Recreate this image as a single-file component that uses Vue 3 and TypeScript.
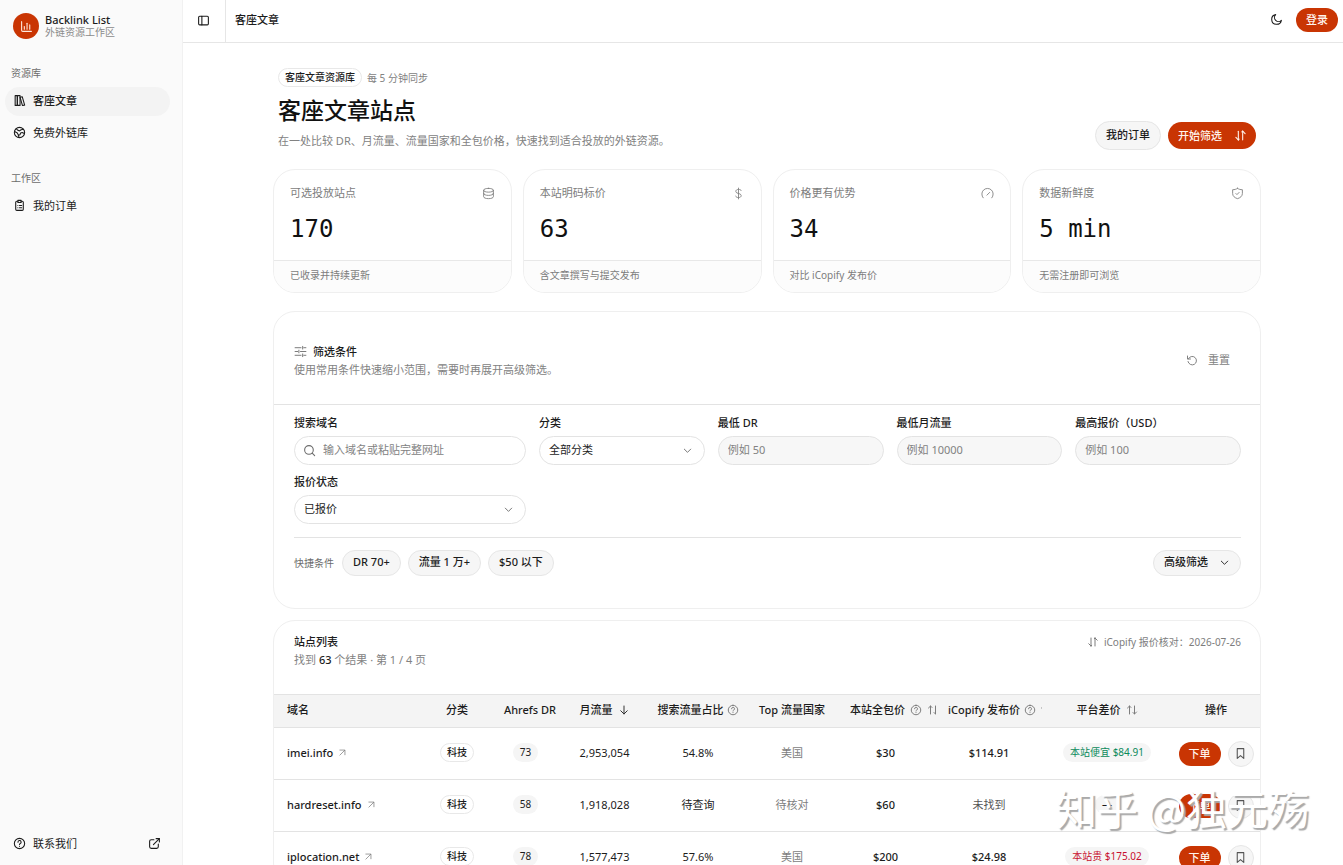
<script setup lang="ts">
import { ref } from 'vue'

interface Stat {
  label: string
  value: string
  note: string
  icon: string[]
}

interface Site {
  domain: string
  category: string
  dr: number
  traffic: string
  share: string
  country: string
  price: string
  rival: string
  diff: string
  tone: 'good' | 'bad' | 'none'
}

const icons = {
  panel: ['M5 4h14a2 2 0 0 1 2 2v12a2 2 0 0 1-2 2H5a2 2 0 0 1-2-2V6a2 2 0 0 1 2-2z', 'M9 4v16'],
  chart: ['M3 3v16a2 2 0 0 0 2 2h16', 'M8 17v-5', 'M13 17V6', 'M18 17V9'],
  books: ['M4 3h4v18H4z', 'M8 3h5v18H8z', 'M13 6l4-1 4.500 15.500-4 .8z'],
  world: ['M12 2.500a9.500 9.500 0 1 0 0 19 9.500 9.500 0 0 0 0-19z', 'M3 10l5 3 2 4 3-1 1-3 3-1 4 2', 'M6 5l3 3 3 1 3-2 4-1', 'M10 17l1 4'],
  clipboard: ['M9 4H7a2 2 0 0 0-2 2v13a2 2 0 0 0 2 2h10a2 2 0 0 0 2-2V6a2 2 0 0 0-2-2h-2', 'M9 2.500h6v4H9z', 'M9 12h.01M12 12h4M9 16h.01M12 16h4'],
  help: ['M12 2.500a9.500 9.500 0 1 0 0 19 9.500 9.500 0 0 0 0-19z', 'M9.200 9.500a2.900 2.900 0 1 1 4.300 2.500c-1 .6-1.500 1-1.500 2', 'M12 17.200v.1'],
  external: ['M11 5H6a3 3 0 0 0-3 3v10a3 3 0 0 0 3 3h10a3 3 0 0 0 3-3v-5', 'M10 14L21 3', 'M15 3h6v6'],
  moon: ['M21 13.500A9 9 0 1 1 10.500 3a7.200 7.200 0 0 0 10.500 10.500z'],
  sortDown: ['M8 4v16', 'M3.500 15.500L8 20', 'M16 20V4', 'M20.500 8.500L16 4', 'M8 20l1.500-1.500', 'M16 4l-1.500 1.500'],
  sortUp: ['M7 20V4', 'M3 8l4-4 3 3', 'M17 4v16', 'M21 16l-4 4-3-3'],
  database: ['M12 2.500c5 0 9 1.500 9 3.500s-4 3.500-9 3.500S3 8 3 6s4-3.500 9-3.500z', 'M3 6v12c0 2 4 3.500 9 3.500s9-1.500 9-3.500V6', 'M3 12c0 2 4 3.500 9 3.500s9-1.500 9-3.500'],
  dollar: ['M12 2v20', 'M17 6.500C16.500 5 14.500 4.500 12 4.500c-3 0-5 1.300-5 3.700 0 5 10 2.600 10 7.600 0 2.400-2 3.700-5 3.700-2.700 0-4.700-.8-5.200-2.700'],
  gauge: ['M4 20a10.500 10.500 0 1 1 16 0', 'M11 15l5-5'],
  shield: ['M12 2.500c2.500 1.800 5.500 2.500 9 2.500V12c0 5-4 8-9 9.500C7 20 3 17 3 12V5c3.500 0 6.500-.7 9-2.500z', 'M9 12l2 2 4-4'],
  sliders: ['M2 5h11M18 5h4M16 2.500v5', 'M2 12h5M12 12h10M9 9.500v5', 'M2 19h11M18 19h4M16 16.500v5'],
  reset: ['M3 4v6h6', 'M4.500 10a8.500 8.500 0 1 1-.5 5'],
  search: ['M11 3a8 8 0 1 0 0 16 8 8 0 0 0 0-16z', 'M17 17l4.500 4.500'],
  chevron: ['M5 9l7 7 7-7'],
  down: ['M12 4v16', 'M5.500 13.500L12 20l6.500-6.500'],
  arrow: ['M5 19L18 6', 'M5 5.500h13.500V18'],
  bookmark: ['M6 3h12v18l-6-5-6 5z'],
}

const stats: Stat[] = [
  { label: '可选投放站点', value: '170', note: '已收录并持续更新', icon: icons.database },
  { label: '本站明码标价', value: '63', note: '含文章撰写与提交发布', icon: icons.dollar },
  { label: '价格更有优势', value: '34', note: '对比 iCopify 发布价', icon: icons.gauge },
  { label: '数据新鲜度', value: '5 min', note: '无需注册即可浏览', icon: icons.shield },
]

const numberFields = [
  { id: 'min-dr', label: '最低 DR', hint: '例如 50' },
  { id: 'min-traffic', label: '最低月流量', hint: '例如 10000' },
  { id: 'max-price', label: '最高报价（USD）', hint: '例如 100' },
]

const quickFilters = ['DR 70+', '流量 1 万+', '$50 以下']

const sites: Site[] = [
  { domain: 'imei.info', category: '科技', dr: 73, traffic: '2,953,054', share: '54.8%', country: '美国', price: '$30', rival: '$114.91', diff: '本站便宜 $84.91', tone: 'good' },
  { domain: 'hardreset.info', category: '科技', dr: 58, traffic: '1,918,028', share: '待查询', country: '待核对', price: '$60', rival: '未找到', diff: '—', tone: 'none' },
  { domain: 'iplocation.net', category: '科技', dr: 78, traffic: '1,577,473', share: '57.6%', country: '美国', price: '$200', rival: '$24.98', diff: '本站贵 $175.02', tone: 'bad' },
]

const keyword = ref('')
const category = ref('全部分类')
const quoteState = ref('已报价')
</script>

<template>
  <div class="app">
    <aside class="sidebar">
      <a class="brand" href="#">
        <span class="logo">
          <svg class="icon" viewBox="0 0 24 24"><path v-for="d in icons.chart" :key="d" :d="d" /></svg>
        </span>
        <span class="brand-text">
          <span class="brand-name">Backlink List</span>
          <span class="brand-sub">外链资源工作区</span>
        </span>
      </a>
      <nav class="nav">
        <h2 class="nav-title">资源库</h2>
        <a class="nav-item active" href="#">
          <svg class="icon" viewBox="0 0 24 24"><path v-for="d in icons.books" :key="d" :d="d" /></svg>客座文章
        </a>
        <a class="nav-item" href="#">
          <svg class="icon" viewBox="0 0 24 24"><path v-for="d in icons.world" :key="d" :d="d" /></svg>免费外链库
        </a>
        <h2 class="nav-title second">工作区</h2>
        <a class="nav-item" href="#">
          <svg class="icon" viewBox="0 0 24 24"><path v-for="d in icons.clipboard" :key="d" :d="d" /></svg>我的订单
        </a>
      </nav>
      <a class="nav-item contact" href="#">
        <svg class="icon" viewBox="0 0 24 24"><path v-for="d in icons.help" :key="d" :d="d" /></svg>联系我们
        <svg class="icon end" viewBox="0 0 24 24"><path v-for="d in icons.external" :key="d" :d="d" /></svg>
      </a>
    </aside>

    <div class="main">
      <header class="topbar">
        <div class="toggle-box">
          <button class="ghost" type="button" aria-label="切换侧边栏">
            <svg class="icon" viewBox="0 0 24 24"><path v-for="d in icons.panel" :key="d" :d="d" /></svg>
          </button>
        </div>
        <span class="crumb">客座文章</span>
        <button class="ghost theme" type="button" aria-label="切换主题">
          <svg class="icon" viewBox="0 0 24 24"><path v-for="d in icons.moon" :key="d" :d="d" /></svg>
        </button>
        <button class="primary login" type="button">登录</button>
      </header>

      <main class="content">
        <section class="hero">
          <div>
            <div class="hero-meta">
              <span class="tag">客座文章资源库</span>
              <span class="sync">每 5 分钟同步</span>
            </div>
            <h1>客座文章站点</h1>
            <p>在一处比较 DR、月流量、流量国家和全包价格，快速找到适合投放的外链资源。</p>
          </div>
          <div class="hero-actions">
            <button class="soft orders" type="button">我的订单</button>
            <button class="primary start" type="button">
              开始筛选
              <svg class="icon" viewBox="0 0 24 24"><path v-for="d in icons.sortDown" :key="d" :d="d" /></svg>
            </button>
          </div>
        </section>

        <section class="stats">
          <article v-for="s in stats" :key="s.label" class="card stat">
            <div class="stat-body">
              <div class="stat-label">
                {{ s.label }}
                <svg class="icon" viewBox="0 0 24 24"><path v-for="d in s.icon" :key="d" :d="d" /></svg>
              </div>
              <div class="stat-value">{{ s.value }}</div>
            </div>
            <div class="stat-note">{{ s.note }}</div>
          </article>
        </section>

        <section class="card filters">
          <div class="filters-head">
            <div>
              <h2 class="card-title">
                <svg class="icon" viewBox="0 0 24 24"><path v-for="d in icons.sliders" :key="d" :d="d" /></svg>筛选条件
              </h2>
              <p class="muted">使用常用条件快速缩小范围，需要时再展开高级筛选。</p>
            </div>
            <button class="reset" type="button">
              <svg class="icon" viewBox="0 0 24 24"><path v-for="d in icons.reset" :key="d" :d="d" /></svg>重置
            </button>
          </div>
          <form class="filters-body" @submit.prevent>
            <div class="fields">
              <div class="field">
                <label for="keyword">搜索域名</label>
                <div class="control">
                  <svg class="icon lead" viewBox="0 0 24 24"><path v-for="d in icons.search" :key="d" :d="d" /></svg>
                  <input id="keyword" v-model="keyword" class="with-icon" type="text" placeholder="输入域名或粘贴完整网址" />
                </div>
              </div>
              <div class="field">
                <label for="category">分类</label>
                <div class="control">
                  <select id="category" v-model="category"><option>全部分类</option><option>科技</option></select>
                  <svg class="icon trail" viewBox="0 0 24 24"><path v-for="d in icons.chevron" :key="d" :d="d" /></svg>
                </div>
              </div>
              <div v-for="f in numberFields" :key="f.id" class="field">
                <label :for="f.id">{{ f.label }}</label>
                <div class="control"><input :id="f.id" class="filled" type="text" inputmode="numeric" :placeholder="f.hint" /></div>
              </div>
              <div class="field">
                <label for="quote">报价状态</label>
                <div class="control">
                  <select id="quote" v-model="quoteState"><option>已报价</option><option>待报价</option></select>
                  <svg class="icon trail" viewBox="0 0 24 24"><path v-for="d in icons.chevron" :key="d" :d="d" /></svg>
                </div>
              </div>
            </div>
            <div class="quick">
              <span class="quick-label">快捷条件</span>
              <button v-for="q in quickFilters" :key="q" class="soft chip" type="button">{{ q }}</button>
              <button class="soft chip advanced" type="button">
                高级筛选
                <svg class="icon" viewBox="0 0 24 24"><path v-for="d in icons.chevron" :key="d" :d="d" /></svg>
              </button>
            </div>
          </form>
        </section>

        <section class="card list">
          <div class="list-head">
            <div>
              <h2 class="card-title">站点列表</h2>
              <p class="muted">找到 <strong>63</strong> 个结果 · 第 1 / 4 页</p>
            </div>
            <span class="checked">
              <svg class="icon" viewBox="0 0 24 24"><path v-for="d in icons.sortDown" :key="d" :d="d" /></svg>
              <span>iCopify 报价核对：2026-07-26</span>
            </span>
          </div>
          <table>
            <colgroup>
              <col class="c-domain" /><col class="c-cat" /><col class="c-dr" /><col class="c-traffic" /><col class="c-share" />
              <col class="c-country" /><col class="c-price" /><col class="c-rival" /><col class="c-diff" /><col class="c-act" />
            </colgroup>
            <thead>
              <tr>
                <th class="left">域名</th>
                <th>分类</th>
                <th class="clip">Ahrefs DR</th>
                <th><span class="th">月流量<svg class="icon dark" viewBox="0 0 24 24"><path v-for="d in icons.down" :key="d" :d="d" /></svg></span></th>
                <th><span class="th tight">搜索流量占比<svg class="icon" viewBox="0 0 24 24"><path v-for="d in icons.help" :key="d" :d="d" /></svg></span></th>
                <th>Top 流量国家</th>
                <th class="clip">
                  <span class="th">本站全包价<svg class="icon" viewBox="0 0 24 24"><path v-for="d in icons.help" :key="d" :d="d" /></svg><svg class="icon" viewBox="0 0 24 24"><path v-for="d in icons.sortUp" :key="d" :d="d" /></svg></span>
                </th>
                <th class="clip near">
                  <span class="th">iCopify 发布价<svg class="icon" viewBox="0 0 24 24"><path v-for="d in icons.help" :key="d" :d="d" /></svg><svg class="icon" viewBox="0 0 24 24"><path v-for="d in icons.sortUp" :key="d" :d="d" /></svg></span>
                </th>
                <th><span class="th">平台差价<svg class="icon" viewBox="0 0 24 24"><path v-for="d in icons.sortUp" :key="d" :d="d" /></svg></span></th>
                <th>操作</th>
              </tr>
            </thead>
            <tbody>
              <tr v-for="s in sites" :key="s.domain">
                <td class="left">
                  <a class="domain" href="#">{{ s.domain }}<svg class="icon" viewBox="0 0 24 24"><path v-for="d in icons.arrow" :key="d" :d="d" /></svg></a>
                </td>
                <td><span class="tag">{{ s.category }}</span></td>
                <td><span class="badge">{{ s.dr }}</span></td>
                <td>{{ s.traffic }}</td>
                <td>{{ s.share }}</td>
                <td class="grey">{{ s.country }}</td>
                <td class="strong">{{ s.price }}</td>
                <td :class="s.tone === 'none' ? 'dim' : 'strong'">{{ s.rival }}</td>
                <td><span class="badge" :class="s.tone">{{ s.diff }}</span></td>
                <td>
                  <span class="actions">
                    <button class="primary order" type="button">下单</button>
                    <button class="soft save" type="button" :aria-label="`收藏 ${s.domain}`">
                      <svg class="icon" viewBox="0 0 24 24"><path v-for="d in icons.bookmark" :key="d" :d="d" /></svg>
                    </button>
                  </span>
                </td>
              </tr>
            </tbody>
          </table>
        </section>
      </main>
    </div>
    <div class="watermark">知乎 @独元殇</div>
  </div>
</template>

<style>
body {
  margin: 0;
  background: #fff;
}
</style>

<style scoped>
.app {
  position: relative;
  display: flex;
  height: 100vh;
  overflow: hidden;
  color: #1c1c1c;
  font: 400 11px/18px "Noto Sans", "Noto Sans CJK SC", sans-serif;
}
.app *,
.app *::before {
  box-sizing: border-box;
}
h1,
h2,
p {
  margin: 0;
}
a {
  color: inherit;
  text-decoration: none;
}
button,
input,
select {
  margin: 0;
  font: inherit;
  color: inherit;
}
button {
  display: inline-flex;
  align-items: center;
  justify-content: center;
  padding: 0;
  border: 0;
  background: none;
  white-space: nowrap;
  cursor: pointer;
}
.icon {
  flex: none;
  width: 13px;
  height: 13px;
  fill: none;
  stroke: currentColor;
  stroke-width: 2;
  stroke-linecap: round;
  stroke-linejoin: round;
}

/* Sidebar */
.sidebar {
  display: flex;
  flex: none;
  flex-direction: column;
  width: 183px;
  padding: 13px 12px 6px 5px;
  border-right: 1px solid #f1f1f1;
  background: #fafafa;
}
.brand {
  display: flex;
  align-items: center;
  gap: 6px;
  padding: 0 8px;
}
.logo {
  display: grid;
  place-items: center;
  width: 26px;
  height: 26px;
  border-radius: 50%;
  background: #c93503;
  color: #ffe9dc;
}
.brand-text {
  display: flex;
  flex-direction: column;
  line-height: 13px;
}
.brand-name {
  font-weight: 500;
}
.brand-sub {
  color: #8b8b8b;
  font-size: 10px;
}
.nav {
  flex: 1;
}
.nav-title {
  height: 28px;
  margin-top: 20px;
  padding-left: 6px;
  color: #6c6c6c;
  font-size: 10px;
  font-weight: 400;
  line-height: 28px;
}
.nav-title.second {
  margin-top: 16px;
}
.nav-item {
  display: flex;
  align-items: center;
  gap: 7px;
  height: 29px;
  margin-bottom: 3px;
  padding: 0 9px 2px 8px;
  border-radius: 15px;
}
.nav-item.active {
  background: #f3f3f3;
  font-weight: 500;
}
.contact {
  margin: 0;
}
.end {
  margin-left: auto;
}

/* Top bar */
.main {
  display: flex;
  flex: 1;
  flex-direction: column;
  min-width: 0;
}
.topbar {
  display: flex;
  flex: none;
  align-items: center;
  height: 43px;
  padding: 0 5px 3px 0;
  border-bottom: 1px solid #e6e6e6;
}
.toggle-box {
  display: grid;
  place-items: center;
  align-self: stretch;
  width: 43px;
  margin-bottom: -3px;
  padding: 0 2px 2px 0;
  border-right: 1px solid #e6e6e6;
}
.ghost {
  width: 24px;
  height: 24px;
}
.crumb {
  padding-left: 9px;
  font-weight: 500;
}
.theme {
  margin-left: auto;
}
.primary {
  border-radius: 15px;
  background: #c93503;
  color: #fff3ec;
  font-weight: 500;
}
.login {
  width: 42px;
  height: 24px;
  margin-left: 8px;
}

/* Page */
.content {
  flex: 1;
  min-height: 0;
  overflow-y: auto;
  padding: 25px 82px 20px 90px;
  scrollbar-width: none;
}
.hero {
  display: flex;
  align-items: flex-end;
  justify-content: space-between;
  padding: 0 5px;
}
.hero-meta {
  display: flex;
  align-items: center;
  gap: 5px;
}
.tag {
  display: inline-block;
  height: 19px;
  padding: 0 6px;
  border: 1px solid #e8e8e8;
  border-radius: 10px;
  font-size: 10px;
  font-weight: 500;
  line-height: 16px;
}
.sync {
  color: #828282;
  font-size: 10px;
}
h1 {
  margin-top: 7px;
  color: #111;
  font-size: 23px;
  font-weight: 500;
  line-height: 32px;
}
.hero p {
  margin-top: 6px;
  color: #828282;
}
.hero-actions {
  display: flex;
  align-items: center;
  gap: 7px;
}
.soft {
  border: 1px solid #e6e6e6;
  border-radius: 15px;
  background: #f6f6f6;
  font-weight: 500;
}
.orders {
  height: 29px;
  padding: 0 10px 2px;
}
.start {
  gap: 12px;
  height: 27px;
  padding: 0 9px 0 10px;
}
.card {
  overflow: hidden;
  border: 1px solid #efefef;
  border-radius: 22px;
  background: #fff;
}
.stats {
  display: grid;
  grid-template-columns: repeat(4, 1fr);
  gap: 11px;
  margin-top: 19px;
}
.stat-body {
  height: 90px;
  padding: 14px 16px 0;
}
.stat-label {
  display: flex;
  align-items: center;
  justify-content: space-between;
  color: #7d7d7d;
}
.stat-label .icon,
.card-title .icon {
  stroke-width: 1.6;
}
.stat-value {
  margin-top: 10px;
  color: #111;
  font: 400 24px/34px "DejaVu Sans Mono", monospace;
}
.stat-note {
  height: 32px;
  padding: 0 16px;
  border-top: 1px solid #e8e8e8;
  background: #fcfcfc;
  color: #7d7d7d;
  font-size: 10px;
  line-height: 28px;
}

/* Filters */
.filters {
  margin-top: 18px;
}
.filters-head {
  display: flex;
  align-items: center;
  justify-content: space-between;
  height: 93px;
  padding: 5px 30px 0 20px;
  border-bottom: 1px solid #e3e3e3;
}
.card-title {
  display: flex;
  align-items: center;
  gap: 6px;
  font-size: 11px;
  font-weight: 500;
  line-height: 18px;
}
.card-title .icon {
  color: #666;
}
.muted,
.reset {
  color: #828282;
}
.muted strong {
  color: #1c1c1c;
  font-weight: 500;
}
.reset {
  gap: 10px;
  padding-bottom: 2px;
}
.reset .icon {
  width: 12px;
  height: 12px;
}
.filters-body {
  padding: 9px 19px 32px 20px;
}
.fields {
  display: grid;
  grid-template-columns: 14fr repeat(4, 10fr);
  gap: 8px 13px;
}
.field {
  display: flex;
  flex-direction: column;
  gap: 4px;
  min-width: 0;
}
.field label {
  font-weight: 500;
}
.control {
  position: relative;
}
.control input,
.control select {
  display: block;
  width: 100%;
  height: 29px;
  padding: 0 9px 2px;
  border: 1px solid #e3e3e3;
  border-radius: 15px;
  outline: none;
  background: #fff;
  appearance: none;
}
.control input::placeholder {
  color: #828282;
  opacity: 1;
}
.control .with-icon {
  padding-left: 28px;
}
.control .filled {
  background: #f7f7f7;
}
.lead,
.trail {
  position: absolute;
  top: 8px;
  color: #6c6c6c;
  pointer-events: none;
}
.lead {
  left: 9px;
}
.trail {
  top: 9px;
  right: 12px;
  width: 11px;
  height: 11px;
}
.quick {
  display: flex;
  align-items: center;
  gap: 7px;
  margin-top: 13px;
  padding-top: 12px;
  border-top: 1px solid #e3e3e3;
}
.quick-label {
  margin-right: 1px;
  color: #6c6c6c;
  font-size: 10px;
}
.chip {
  height: 26px;
  padding: 0 10px 2px;
}
.advanced {
  gap: 11px;
  margin-left: auto;
}
.advanced .icon {
  width: 11px;
  height: 11px;
}

/* Site list */
.list {
  margin-top: 11px;
}
.list-head {
  display: flex;
  justify-content: space-between;
  height: 73px;
  padding: 12px 19px 0 20px;
}
.checked {
  display: flex;
  align-items: center;
  gap: 5px;
  height: 18px;
  color: #7d7d7d;
  font-size: 10px;
}
.checked .icon {
  width: 12px;
  height: 12px;
}
table {
  width: 100%;
  border-collapse: collapse;
  table-layout: fixed;
}
.c-cat { width: 64px; }
.c-dr { width: 73px; }
.c-traffic { width: 85px; }
.c-share { width: 102px; }
.c-country { width: 86px; }
.c-price { width: 101px; }
.c-rival { width: 106px; }
.c-diff { width: 130px; }
.c-act { width: 88px; }
th {
  height: 33px;
  padding: 0 0 2px;
  border-top: 1px solid #e3e3e3;
  background: #f4f4f4;
  font-weight: 500;
  text-align: center;
  white-space: nowrap;
}
th.clip {
  overflow: hidden;
  padding-left: 15px;
  text-align: left;
}
th.near {
  padding-left: 12px;
}
.th {
  display: inline-flex;
  align-items: center;
  gap: 5px;
  vertical-align: top;
}
.near .th {
  gap: 4px;
}
.th.tight {
  gap: 3px;
}
.th .icon {
  width: 12px;
  height: 12px;
  color: #7d7d7d;
}
.th .dark {
  color: #333;
}
td {
  height: 52px;
  padding: 0 0 2px;
  border-top: 1px solid #e3e3e3;
  text-align: center;
  white-space: nowrap;
}
td:last-child {
  padding-bottom: 0;
}
th.left,
td.left {
  padding-left: 13px;
  text-align: left;
}
.domain {
  display: inline-flex;
  align-items: center;
  gap: 5px;
  font-weight: 500;
}
.domain .icon {
  width: 9px;
  height: 9px;
  color: #7d7d7d;
}
.strong {
  font-weight: 500;
}
.grey {
  color: #7d7d7d;
}
.dim {
  color: #555;
}
.badge {
  display: inline-block;
  height: 19px;
  padding: 0 7px;
  border-radius: 10px;
  background: #f5f5f5;
  font-size: 10px;
  line-height: 18px;
}
.badge.good {
  color: #0a8a5b;
}
.badge.bad {
  color: #c8102e;
}
.actions {
  display: inline-flex;
  align-items: center;
  gap: 7px;
  vertical-align: middle;
}
.order {
  width: 42px;
  height: 24px;
}
.save {
  width: 26px;
  height: 26px;
}
.save .icon {
  color: #555;
}
.watermark {
  position: absolute;
  right: 34px;
  bottom: 34px;
  color: #fff;
  font-family: "Noto Sans CJK SC", sans-serif;
  font-size: 41px;
  line-height: 48px;
  text-shadow: 2px 2px 1px #aaa;
  pointer-events: none;
}
</style>
